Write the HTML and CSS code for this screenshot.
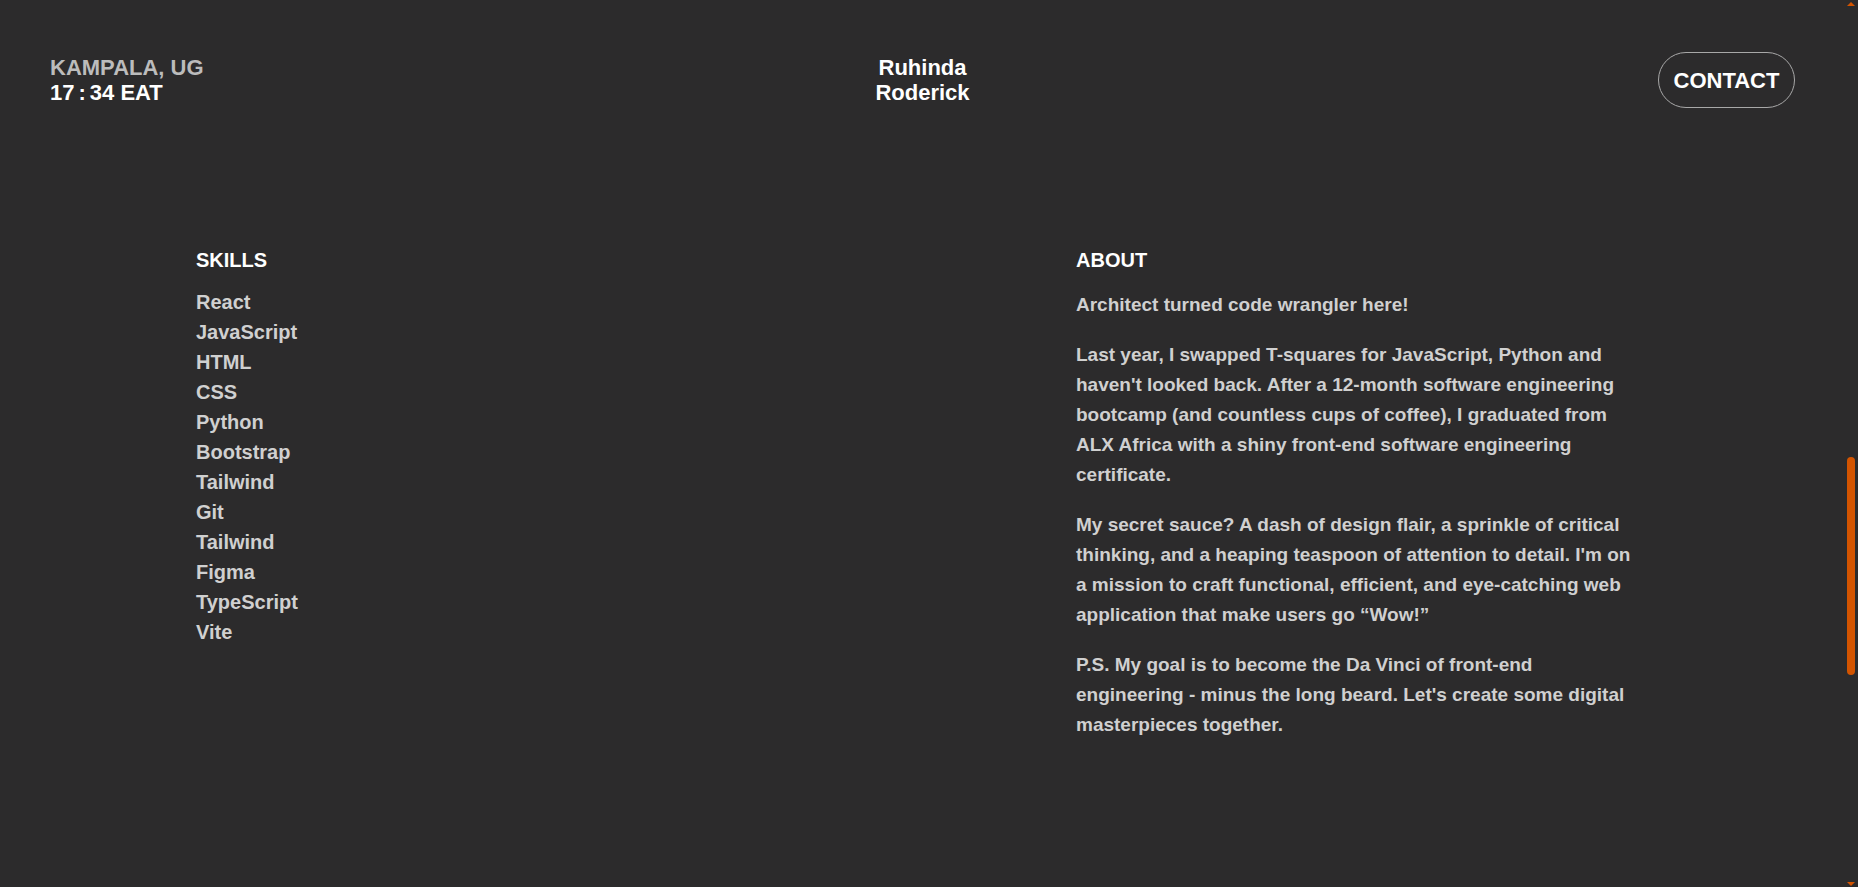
FILE: index.html
```html
<!DOCTYPE html>
<html lang="en">
<head>
<meta charset="utf-8">
<title>Ruhinda Roderick</title>
<link rel="stylesheet" href="styles.css">
</head>
<body>
<div class="app">
  <div class="page">
    <header class="site-header">
      <div class="locale">
        <div class="city">KAMPALA, UG</div>
        <div class="time">17<span class="sep">:</span>34 EAT</div>
      </div>
      <div class="brand">Ruhinda<br>Roderick</div>
      <div class="actions">
        <a class="contact-btn" href="#contact">CONTACT</a>
      </div>
    </header>

    <main class="info" id="about">
      <div class="skills">
        <h2 class="section-title">SKILLS</h2>
        <ul class="skill-list">
          <li>React</li>
          <li>JavaScript</li>
          <li>HTML</li>
          <li>CSS</li>
          <li>Python</li>
          <li>Bootstrap</li>
          <li>Tailwind</li>
          <li>Git</li>
          <li>Tailwind</li>
          <li>Figma</li>
          <li>TypeScript</li>
          <li>Vite</li>
        </ul>
      </div>
      <div class="about">
        <h2 class="section-title">ABOUT</h2>
        <div class="about-text">
          <p>Architect turned code wrangler here!</p>
          <p>Last year, I swapped T-squares for JavaScript, Python and haven't looked back. After a 12-month software engineering bootcamp (and countless cups of coffee), I graduated from ALX Africa with a shiny front-end software engineering certificate.</p>
          <p>My secret sauce? A dash of design flair, a sprinkle of critical thinking, and a heaping teaspoon of attention to detail. I'm on a mission to craft functional, efficient, and eye-catching web application that make users go “Wow!”</p>
          <p>P.S. My goal is to become the Da Vinci of front-end engineering - minus the long beard. Let's create some digital masterpieces together.</p>
        </div>
      </div>
    </main>
  </div>

  <div class="scrollbar" aria-hidden="true">
    <div class="sb-button"><span class="sb-arrow sb-up"></span></div>
    <div class="sb-track"><div class="sb-thumb"></div></div>
    <div class="sb-button"><span class="sb-arrow sb-down"></span></div>
  </div>
</div>
</body>
</html>
```

FILE: styles.css
```css
html,
body {
  margin: 0;
  height: 100%;
  background: #2c2b2c;
}

body {
  overflow: hidden;
  color: #d0d0d0;
  font-family: "Liberation Sans", Arial, sans-serif;
  font-weight: 700;
}

.app {
  display: flex;
  height: 100vh;
}

.page {
  flex: 1;
  min-width: 0;
}

/* Header */
.site-header {
  display: grid;
  grid-template-columns: 1fr auto 1fr;
  align-items: center;
  padding: 52px 48px 52px 50px;
  font-size: 22px;
  line-height: 25px;
}

.city {
  color: #bcbcbc;
}

.time {
  color: #ffffff;
}

.sep {
  margin: 0 4px;
}

.brand {
  color: #ffffff;
  text-align: center;
}

.actions {
  display: flex;
  justify-content: flex-end;
}

.contact-btn {
  box-sizing: border-box;
  display: inline-flex;
  align-items: center;
  justify-content: center;
  height: 56px;
  width: 137px;
  border: 1px solid #a8a8a8;
  border-radius: 28px;
  color: #ffffff;
  text-decoration: none;
  font-size: 22px;
}

/* Skills / About */
.info {
  display: grid;
  grid-template-columns: 880px 562px;
  padding: 88px 0 0 196px;
}

.section-title {
  margin: 0;
  color: #ffffff;
  font-size: 20px;
  line-height: 24px;
}

.skill-list {
  list-style: none;
  margin: 15px 0 0;
  padding: 0;
  font-size: 20px;
  line-height: 30px;
  color: #d0d0d0;
}

.about-text {
  margin-top: 18px;
  font-size: 19px;
  line-height: 30px;
  color: #d0d0d0;
}

.about-text p {
  margin: 0 0 20px;
}

/* Scrollbar (decorative, matching the page's orange themed bar) */
.scrollbar {
  width: 15px;
  display: flex;
  flex-direction: column;
  background: #2c2b2c;
}

.sb-button {
  height: 15px;
  display: flex;
  justify-content: center;
  align-items: center;
}

.sb-arrow {
  width: 0;
  height: 0;
  border-left: 4px solid transparent;
  border-right: 4px solid transparent;
}

.sb-up {
  margin-top: -8px;
  border-bottom: 4px solid #d35400;
}

.sb-down {
  margin-bottom: -8px;
  border-top: 4px solid #d35400;
}

.sb-track {
  flex: 1;
  display: flex;
  justify-content: center;
}

.sb-thumb {
  width: 8px;
  height: 218px;
  margin-top: 442px;
  border-radius: 4px;
  background: #d35400;
}
```
